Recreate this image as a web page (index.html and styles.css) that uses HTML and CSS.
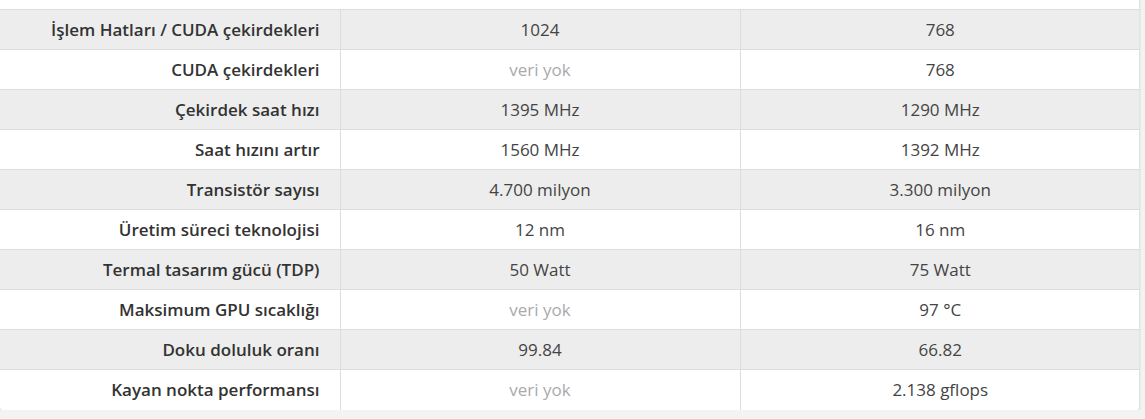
FILE: index.html
```html
<!DOCTYPE html>
<html lang="tr">
<head>
<meta charset="utf-8">
<link rel="stylesheet" href="styles.css">
</head>
<body>
<div class="card">
  <table class="specs">
    <colgroup><col class="c-label"><col class="c-val"><col class="c-val"></colgroup>
    <tbody>
      <tr><th>İşlem Hatları / CUDA çekirdekleri</th><td>1024</td><td>768</td></tr>
      <tr><th>CUDA çekirdekleri</th><td class="na">veri yok</td><td>768</td></tr>
      <tr><th>Çekirdek saat hızı</th><td>1395 MHz</td><td>1290 MHz</td></tr>
      <tr><th>Saat hızını artır</th><td>1560 MHz</td><td>1392 MHz</td></tr>
      <tr><th>Transistör sayısı</th><td>4.700 milyon</td><td>3.300 milyon</td></tr>
      <tr><th>Üretim süreci teknolojisi</th><td>12 nm</td><td>16 nm</td></tr>
      <tr><th>Termal tasarım gücü (TDP)</th><td>50 Watt</td><td>75 Watt</td></tr>
      <tr><th>Maksimum GPU sıcaklığı</th><td class="na">veri yok</td><td>97 °C</td></tr>
      <tr><th>Doku doluluk oranı</th><td>99.84</td><td>66.82</td></tr>
      <tr><th>Kayan nokta performansı</th><td class="na">veri yok</td><td>2.138 gflops</td></tr>
    </tbody>
  </table>
</div>
</body>
</html>
```

FILE: styles.css
```css
html, body {
  margin: 0;
  padding: 0;
  background: #f3f3f3;
  font-family: "Open Sans", "Noto Sans", sans-serif;
}
.card {
  width: 1140px;
  background: #ffffff;
  padding-top: 9px;
  border-radius: 0 0 4px 4px;
  box-shadow: 0 1px 2px rgba(0, 0, 0, 0.12);
  border-right: 1px solid #e2e2e2;
  box-sizing: border-box;
  overflow: hidden;
}
.specs {
  width: 1140px;
  border-collapse: collapse;
  table-layout: fixed;
  font-size: 17px;
}
.c-label { width: 340px; }
.c-val { width: 400px; }
.specs th, .specs td {
  height: 40px;
  padding: 0 20px;
  border-top: 1px solid #dddddd;
  border-left: 1px solid #dddddd;
  box-sizing: border-box;
  white-space: nowrap;
}
.specs th {
  text-align: right;
  font-weight: 600;
  color: #333333;
  border-left: none;
}
.specs td {
  text-align: center;
  font-weight: 400;
  color: #444444;
}
.specs td.na { color: #aaaaaa; }
.specs tr:nth-child(odd) { background: #ededed; }
.specs tr:nth-child(even) { background: #ffffff; }
```
